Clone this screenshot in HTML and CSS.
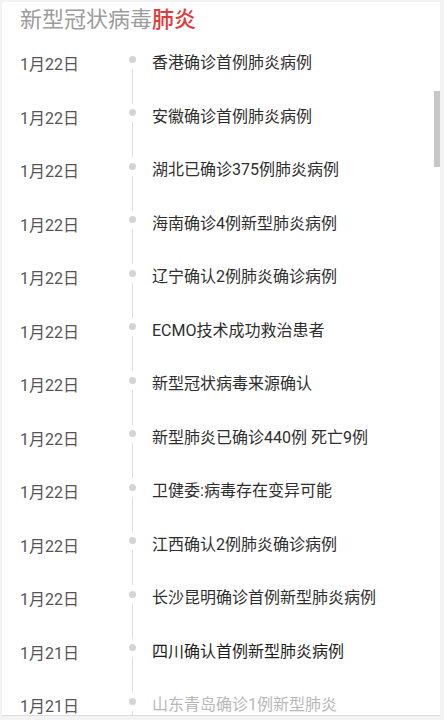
FILE: index.html
```html
<!DOCTYPE html>
<html lang="zh-CN">
<head>
<meta charset="utf-8">
<title>新型冠状病毒肺炎</title>
<link rel="stylesheet" href="styles.css">
</head>
<body>
<div class="card">
  <h1 class="title">新型冠状病毒<span class="hot">肺炎</span></h1>
  <ul class="timeline">
    <li class="row"><span class="date">1月22日</span><span class="rail"><i class="dot"></i><i class="line"></i></span><span class="text">香港确诊首例肺炎病例</span></li>
    <li class="row"><span class="date">1月22日</span><span class="rail"><i class="dot"></i><i class="line"></i></span><span class="text">安徽确诊首例肺炎病例</span></li>
    <li class="row"><span class="date">1月22日</span><span class="rail"><i class="dot"></i><i class="line"></i></span><span class="text">湖北已确诊375例肺炎病例</span></li>
    <li class="row"><span class="date">1月22日</span><span class="rail"><i class="dot"></i><i class="line"></i></span><span class="text">海南确诊4例新型肺炎病例</span></li>
    <li class="row"><span class="date">1月22日</span><span class="rail"><i class="dot"></i><i class="line"></i></span><span class="text">辽宁确认2例肺炎确诊病例</span></li>
    <li class="row"><span class="date">1月22日</span><span class="rail"><i class="dot"></i><i class="line"></i></span><span class="text">ECMO技术成功救治患者</span></li>
    <li class="row"><span class="date">1月22日</span><span class="rail"><i class="dot"></i><i class="line"></i></span><span class="text">新型冠状病毒来源确认</span></li>
    <li class="row"><span class="date">1月22日</span><span class="rail"><i class="dot"></i><i class="line"></i></span><span class="text">新型肺炎已确诊440例 死亡9例</span></li>
    <li class="row"><span class="date">1月22日</span><span class="rail"><i class="dot"></i><i class="line"></i></span><span class="text">卫健委:病毒存在变异可能</span></li>
    <li class="row"><span class="date">1月22日</span><span class="rail"><i class="dot"></i><i class="line"></i></span><span class="text">江西确认2例肺炎确诊病例</span></li>
    <li class="row"><span class="date">1月22日</span><span class="rail"><i class="dot"></i><i class="line"></i></span><span class="text">长沙昆明确诊首例新型肺炎病例</span></li>
    <li class="row"><span class="date">1月21日</span><span class="rail"><i class="dot"></i><i class="line"></i></span><span class="text strong">四川确认首例新型肺炎病例</span></li>
    <li class="row"><span class="date">1月21日</span><span class="rail"><i class="dot"></i><i class="line"></i></span><span class="text faded">山东青岛确诊1例新型肺炎</span></li>
  </ul>
  <div class="thumb"></div>
</div>
</body>
</html>
```
FILE: styles.css
```css
html, body {
  margin: 0;
  padding: 0;
  height: 720px;
  overflow: hidden;
  background: #f3f3f3;
}
body {
  font-family: Roboto, "Noto Sans CJK SC", sans-serif;
  padding: 2px 4px 0 2px;
  box-sizing: border-box;
}
.card {
  position: relative;
  background: #ffffff;
  height: 714px;
  overflow: hidden;
  border-bottom: 1px solid #dcdcdc;
  box-sizing: border-box;
  padding-left: 18px;
}
.title {
  margin: 0 0 12px 0;
  font-size: 22px;
  line-height: 36px;
  font-weight: normal;
  color: #9c9c9c;
}
.hot {
  color: #e03a3c;
  font-weight: 500;
}
.timeline {
  list-style: none;
  margin: 0;
  padding: 0;
}
.row {
  display: grid;
  grid-template-columns: 109px 7px 1fr;
  height: 53.5px;
}
.date {
  padding-top: 2px;
  font-size: 16px;
  line-height: 25px;
  color: #555555;
}
.rail {
  display: flex;
  flex-direction: column;
  align-items: center;
}
.dot {
  width: 7px;
  height: 7px;
  border-radius: 50%;
  background: #d4d4d4;
  margin-top: 5.5px;
  flex: none;
}
.line {
  flex: 1;
  width: 1.5px;
  background: #dddddd;
  margin-top: 6px;
}
.text {
  margin-left: 16px;
  font-size: 16px;
  line-height: 25px;
  color: #2e2e2e;
}
.text.strong {
  color: #1e1e1e;
}
.text.faded {
  color: #b8b8b8;
}
.thumb {
  position: absolute;
  right: 0;
  top: 89px;
  width: 6px;
  height: 76px;
  background: #c7c7c7;
}
```
